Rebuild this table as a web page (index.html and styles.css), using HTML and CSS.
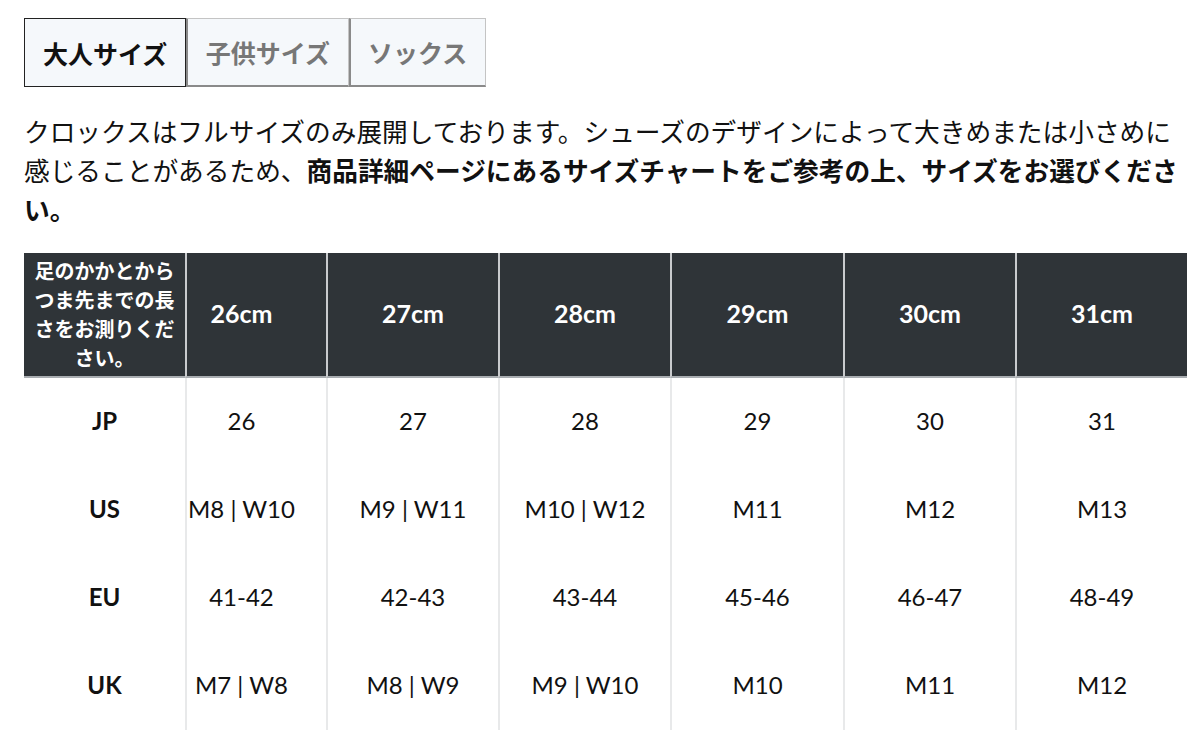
FILE: index.html
```html
<!DOCTYPE html>
<html lang="ja">
<head>
<meta charset="utf-8">
<title>サイズチャート</title>
<link rel="stylesheet" href="styles.css">
</head>
<body>
<div class="page">
  <div class="tabs">
    <div class="tab tab-active">大人サイズ</div>
    <div class="tab">子供サイズ</div>
    <div class="tab">ソックス</div>
  </div>
  <p class="note">クロックスはフルサイズのみ展開しております。シューズのデザインによって大きめまたは小さめに感じることがあるため、<strong>商品詳細ページにあるサイズチャートをご参考の上、サイズをお選びください。</strong></p>
  <table class="chart">
    <colgroup>
      <col class="c-label">
      <col class="c-first">
      <col class="c-std">
      <col class="c-std">
      <col class="c-wide">
      <col class="c-std">
      <col class="c-std">
    </colgroup>
    <thead>
      <tr>
        <th class="corner">足のかかとからつま先までの長さをお測りください。</th>
        <th class="first">26cm</th>
        <th>27cm</th>
        <th>28cm</th>
        <th>29cm</th>
        <th>30cm</th>
        <th>31cm</th>
      </tr>
    </thead>
    <tbody>
      <tr>
        <th class="rowhead">JP</th>
        <td class="first">26</td><td>27</td><td>28</td><td>29</td><td>30</td><td>31</td>
      </tr>
      <tr>
        <th class="rowhead">US</th>
        <td class="first">M8 | W10</td><td>M9 | W11</td><td>M10 | W12</td><td>M11</td><td>M12</td><td>M13</td>
      </tr>
      <tr>
        <th class="rowhead">EU</th>
        <td class="first">41-42</td><td>42-43</td><td>43-44</td><td>45-46</td><td>46-47</td><td>48-49</td>
      </tr>
      <tr>
        <th class="rowhead">UK</th>
        <td class="first">M7 | W8</td><td>M8 | W9</td><td>M9 | W10</td><td>M10</td><td>M11</td><td>M12</td>
      </tr>
    </tbody>
  </table>
</div>
</body>
</html>
```
FILE: styles.css
```css
* { box-sizing: border-box; }
html, body { margin: 0; padding: 0; background: #ffffff; }
body {
  font-family: Lato, "Noto Sans CJK JP", sans-serif;
  color: #111111;
}
.page {
  padding: 18px 0 0 24px;
  width: 1187px;
}
.tabs {
  display: flex;
  gap: 0;
}
.tab {
  height: 69px;
  padding: 0 17.5px;
  display: flex;
  align-items: center;
  font-family: "Noto Sans CJK JP", sans-serif;
  font-weight: 700;
  font-size: 25px;
  color: #777777;
  background: #f5f8fb;
  border-top: 1px solid #c4c4c4;
  border-right: 1px solid #c4c4c4;
  border-bottom: 2px solid #8a8a8a;
  border-left: 2px solid #8a8a8a;
}
.tab-active {
  color: #111111;
  border: 1.5px solid #222222;
  padding: 0 18px;
}
.note {
  margin: 24px 0 0 0;
  width: 1163px;
  font-family: "Noto Sans CJK JP", sans-serif;
  font-size: 25.7px;
  line-height: 39px;
  color: #111111;
}
.note strong { font-weight: 700; }
.chart {
  margin-top: 25px;
  width: 1163px;
  table-layout: fixed;
  border-collapse: separate;
  border-spacing: 0;
}
.c-label { width: 161px; }
.c-first { width: 141px; }
.c-std { width: 172px; }
.c-wide { width: 173px; }
.chart thead th {
  height: 125px;
  background: #2f3438;
  color: #ffffff;
  font-weight: 700;
  font-size: 25px;
  text-align: center;
  border-bottom: 2px solid #a9adb1;
  border-left: 2px solid #c9cbcd;
  padding: 0 0 4px 0;
}
.chart thead th.corner {
  border-left: none;
  font-family: "Noto Sans CJK JP", sans-serif;
  font-size: 20px;
  line-height: 29px;
  padding: 0 6px 2px 6px;
}
.chart thead th.first {
  padding-right: 30px;
}
.chart tbody td.first {
  padding-right: 30px;
}
.chart tbody tr { height: 88px; }
.chart tbody th,
.chart tbody td {
  padding: 0 0 4px 0;
}
.chart tbody th.rowhead {
  font-weight: 700;
  font-size: 24px;
  text-align: center;
  color: #111111;
}
.chart tbody td {
  font-size: 24px;
  font-weight: 400;
  text-align: center;
  color: #111111;
  border-left: 2px solid #e8e9ea;
  white-space: nowrap;
}
```
